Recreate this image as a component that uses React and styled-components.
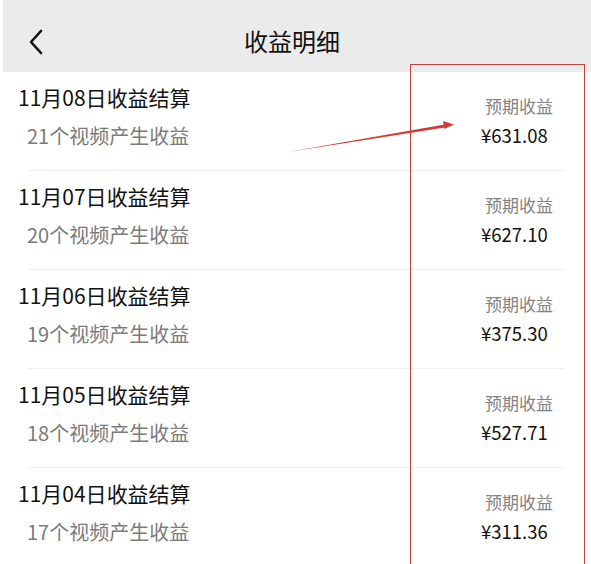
import styled, { createGlobalStyle } from "styled-components";

const GlobalStyle = createGlobalStyle`
  html, body {
    margin: 0;
    padding: 0;
    background: #fff;
    overflow: hidden;
  }
  body {
    font-family: "Noto Sans CJK SC", "Noto Sans", sans-serif;
  }
`;

const records = [
  { date: "11月08日", count: 21, amount: "631.08" },
  { date: "11月07日", count: 20, amount: "627.10" },
  { date: "11月06日", count: 19, amount: "375.30" },
  { date: "11月05日", count: 18, amount: "527.71" },
  { date: "11月04日", count: 17, amount: "311.36" },
];

const Page = styled.div`
  position: relative;
  width: 591px;
  height: 564px;
  overflow: hidden;
  background: #fff;
`;

const Header = styled.header`
  position: relative;
  display: flex;
  align-items: center;
  justify-content: center;
  height: 72px;
  margin-left: 3px;
  padding: 8px 10px 0 0;
  box-sizing: border-box;
  background: #ebebeb;
`;

const BackButton = styled.button`
  position: absolute;
  left: 20px;
  top: 28px;
  width: 26px;
  height: 28px;
  padding: 0;
  border: none;
  background: none;
  display: flex;
  align-items: center;
  justify-content: center;
`;

const Title = styled.h1`
  margin: 0;
  font-size: 24px;
  font-weight: 400;
  color: #111;
`;

const List = styled.div`
  display: flex;
  flex-direction: column;
`;

const Row = styled.div`
  display: flex;
  justify-content: space-between;
  height: 98px;
`;

const LeftCol = styled.div`
  display: flex;
  flex-direction: column;
  padding: 12px 0 0 18px;
`;

const RowTitle = styled.div`
  font-size: 21px;
  line-height: 26px;
  color: #111;
`;

const RowSub = styled.div`
  margin: 13px 0 0 9px;
  font-size: 20px;
  line-height: 26px;
  color: #7b7b7b;
`;

const RightCol = styled.div`
  display: flex;
  flex-direction: column;
  align-items: flex-start;
  width: 75px;
  padding: 23px 35px 0 0;
`;

const Label = styled.div`
  margin-left: 4px;
  font-size: 17px;
  line-height: 22px;
  color: #838383;
`;

const Amount = styled.div`
  margin-top: 6px;
  font-size: 18.5px;
  line-height: 24px;
  color: #111;
`;

const Divider = styled.div`
  height: 1px;
  margin: 0 28px;
  background: #eeeeee;
`;

const Highlight = styled.div`
  position: absolute;
  left: 410px;
  top: 64px;
  width: 173px;
  height: 540px;
  border: 1.5px solid #c8403d;
  pointer-events: none;
`;

const Annotation = styled.svg`
  position: absolute;
  left: 0;
  top: 0;
  pointer-events: none;
`;

export default function App() {
  return (
    <>
      <GlobalStyle />
      <Page>
        <Header>
          <BackButton aria-label="返回">
            <svg width="18" height="26" viewBox="0 0 18 26">
              <polyline
                points="14,2 4,13 14,24"
                fill="none"
                stroke="#111"
                strokeWidth="2.6"
                strokeLinecap="round"
                strokeLinejoin="round"
              />
            </svg>
          </BackButton>
          <Title>收益明细</Title>
        </Header>
        <List>
          {records.map((r) => (
            <div key={r.date}>
              <Row>
                <LeftCol>
                  <RowTitle>{r.date}收益结算</RowTitle>
                  <RowSub>{r.count}个视频产生收益</RowSub>
                </LeftCol>
                <RightCol>
                  <Label>预期收益</Label>
                  <Amount>¥{r.amount}</Amount>
                </RightCol>
              </Row>
              <Divider />
            </div>
          ))}
        </List>
        <Highlight />
        <Annotation width="591" height="564" viewBox="0 0 591 564">
          <polygon points="288,152 446,124.2 446.5,127.2" fill="#d23b35" />
          <polygon points="454,124.5 443,121 444.5,129" fill="#d23b35" />
        </Annotation>
      </Page>
    </>
  );
}
